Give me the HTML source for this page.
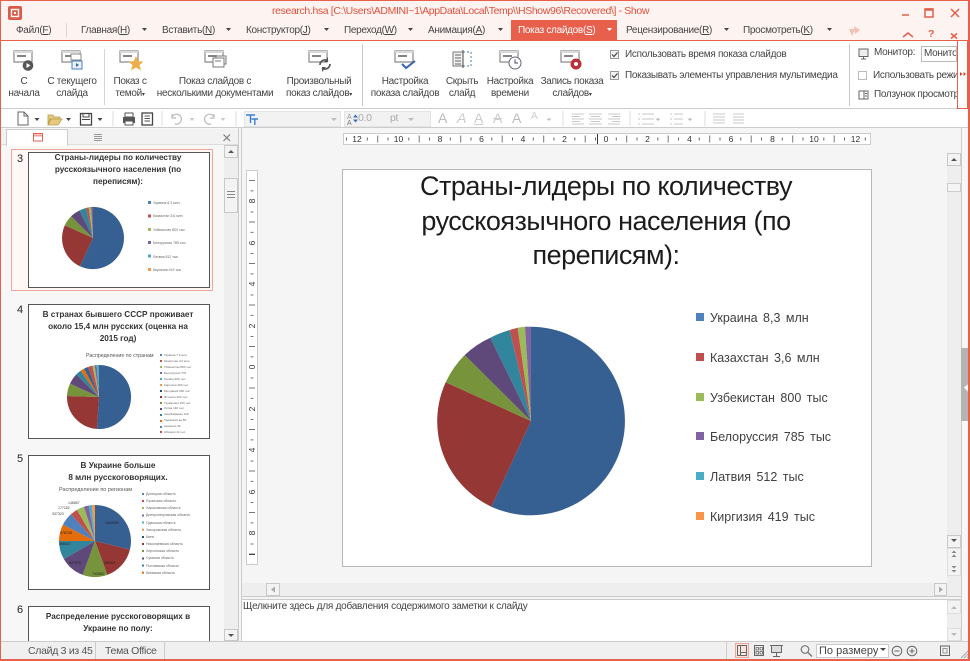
<!DOCTYPE html>
<html><head><meta charset="utf-8"><style>
html,body{margin:0;padding:0;background:#fff}
#r{position:relative;width:970px;height:661px;overflow:hidden;background:#f5f5f5;font-family:"Liberation Sans","Noto Sans CJK SC",sans-serif;color:#444;font-size:10px;letter-spacing:-.3px}
.a{position:absolute}
.t{position:absolute;white-space:nowrap;line-height:12px}
.c{position:absolute;white-space:nowrap;line-height:12px;transform:translateX(-50%);text-align:center}
.b{position:absolute;background:#eee;border:1px solid #ccc;box-sizing:border-box}
.s{position:absolute;background:#f3f3f3;border:1px solid #c8c8c8;box-sizing:border-box}
.k{position:absolute;width:9px;height:9px;border:1px solid #999;box-sizing:border-box;background:#fff}
.l{position:absolute;width:8px;height:8px}
.th{position:absolute;left:28px;width:182px;background:#fff;border:1px solid #555;border-width:1.5px;box-sizing:border-box}
.tt{font-weight:bold;font-size:8.2px;color:#333;text-align:center;letter-spacing:0}
.m{font-size:3.5px;color:#666;line-height:4px;letter-spacing:0}
.g{font-size:12.5px;line-height:14px;color:#404040;word-spacing:2px;letter-spacing:0;left:710px}
.rh{position:absolute;top:133px;height:12px;line-height:12px;width:14px;margin-left:-7px;text-align:center;font-size:8.5px;color:#333;letter-spacing:0;background:#fff}
.rv{position:absolute;left:252px;width:12px;height:10px;line-height:10px;text-align:center;font-size:8.5px;color:#333;letter-spacing:0;transform:translate(-50%,-50%) rotate(-90deg)}
svg{position:absolute;overflow:visible}
</style></head><body><div id="r">
<svg width="0" height="0" style="left:0;top:0"><defs>
<symbol id="pie" viewBox="-100 -100 200 200" overflow="visible">
<path fill="#376092" d="M0 0L0-94.3A94.3 94.3 0 1 1-39.7 85.7Z"/>
<path fill="#953735" d="M0 0L-39.7 85.7A94.3 94.3 0 0 1-85.3-38.7Z"/>
<path fill="#77933c" d="M0 0L-85.3-38.7A94.3 94.3 0 0 1-66.3-66Z"/>
<path fill="#5f497a" d="M0 0L-66.3-66A94.3 94.3 0 0 1-40.7-83.3Z"/>
<path fill="#31859c" d="M0 0L-40.7-83.3A94.3 94.3 0 0 1-21.3-91Z"/>
<path fill="#c0504d" d="M0 0L-21.3-91A94.3 94.3 0 0 1-13.3-93.3Z"/>
<path fill="#9bbb59" d="M0 0L-13.3-93.3A94.3 94.3 0 0 1-6-94.3Z"/>
<path fill="#8064a2" d="M0 0L-6-94.3A94.3 94.3 0 0 1 0-94.3Z"/>
</symbol>
<symbol id="scr" viewBox="0 0 24 16" overflow="visible">
<path d="M1 1H19V12H1Z" fill="#fff" stroke="#8a8a8a" stroke-width="1.2"/><path d="M1 1H19V3H1Z" fill="#d9d9d9"/><path d="M4 6H13" stroke="#666" stroke-width="1.6"/>
</symbol>
</defs></svg>

<!-- title bar -->
<div class="a" style="left:0;top:0;width:970px;height:40px;background:#fdf4f1"></div>
<svg style="left:7px;top:5px" width="16" height="16"><rect x="1" y="1" width="14" height="14" rx="2" fill="#dd5a48"/><rect x="4.5" y="4.5" width="7" height="7" fill="none" stroke="#fff" stroke-width="1.4"/><rect x="7" y="7" width="2" height="2" fill="#fff"/></svg>
<div class="t" style="left:272px;top:5px;color:#e0503d;font-size:10.5px;letter-spacing:-.37px">research.hsa [C:\Users\ADMINI~1\AppData\Local\Temp\\HShow96\Recovered\] - Show</div>
<svg style="left:895px;top:4px" width="70" height="36" fill="none" stroke="#e0604c" stroke-width="1.5"><path d="M7 11H14"/><rect x="30" y="5" width="8" height="8"/><path d="M30 5.5H38" stroke-width="2.5"/><path d="M56 5L64 13M64 5L56 13"/><path d="M8 33L13 29L18 33"/><path d="M56 29.500L62 34.500M62 29.500L56 34.500"/></svg>
<div class="t" style="left:928px;top:28px;color:#e0604c;font-weight:bold;font-size:10.5px">?</div>

<!-- tabs -->
<div class="a" style="left:511px;top:20px;width:106px;height:20px;background:#e8604c"></div>
<div class="t" style="left:16px;top:25px">Файл(<u>F</u>)</div>
<div class="a" style="left:66px;top:23px;width:1px;height:14px;background:#e4d4d0"></div>
<div class="t" style="left:81px;top:25px">Главная(<u>H</u>)</div>
<div class="t" style="left:162px;top:25px">Вставить(<u>N</u>)</div>
<div class="t" style="left:246px;top:25px">Конструктор(<u>J</u>)</div>
<div class="t" style="left:344px;top:25px">Переход(<u>W</u>)</div>
<div class="t" style="left:428px;top:25px">Анимация(<u>A</u>)</div>
<div class="t" style="left:518px;top:25px;color:#fff">Показ слайдов(<u>S</u>)</div>
<div class="t" style="left:626px;top:25px">Рецензирование(<u>R</u>)</div>
<div class="t" style="left:743px;top:25px">Просмотреть(<u>K</u>)</div>
<svg style="left:0;top:27px" width="840" height="5" fill="#444"><path d="M142 1h5l-2.5 3zM226 1h5l-2.5 3zM324 1h5l-2.5 3zM408 1h5l-2.5 3zM498 1h5l-2.5 3zM724 1h5l-2.500 3zM827 1h5l-2.5 3z"/><path fill="#fff" d="M607 1h5l-2.5 3z"/></svg>
<svg style="left:848px;top:25px" width="14" height="12"><path d="M1 4H7L4 11ZM6 1L12 5L7 9Z" fill="#f2c0b4"/></svg>

<!-- ribbon -->
<div class="a" style="left:0;top:40px;width:970px;height:69px;background:#fff;border-top:1px solid #e8604c;border-bottom:1px solid #ccc;box-sizing:border-box"></div>
<div class="a" style="left:104px;top:49px;width:1px;height:56px;background:#d6d6d6"></div>
<div class="a" style="left:362px;top:44px;width:1px;height:62px;background:#c8c8c8"></div>
<div class="a" style="left:849px;top:44px;width:1px;height:62px;background:#c8c8c8"></div>
<div class="a" style="left:957px;top:40px;width:11px;height:69px;border:1px solid #e8604c;box-sizing:border-box;background:#fff"></div>
<svg style="left:960px;top:71px" width="7" height="6" fill="#d8402c"><path d="M0 1l2.5 2L0 5zM3.500 1L6 3L3.500 5z"/></svg>

<svg style="left:13px;top:50px" width="24" height="16"><use href="#scr" width="24" height="16"/></svg>
<svg style="left:22px;top:60px" width="12" height="12"><circle cx="6" cy="5.500" r="5.300" fill="#555"/><path d="M4.500 3L8.500 5.500L4.500 8Z" fill="#fff"/></svg>
<svg style="left:61px;top:50px" width="24" height="22"><use href="#scr" width="24" height="16"/><rect x="10" y="4" width="10" height="6" fill="#fff" stroke="#888"/><rect x="11" y="11" width="10" height="8" fill="#eaf1fb" stroke="#4a7ec0"/><path d="M15 13l3 2-3 2z" fill="#2f6ab0"/></svg>
<svg style="left:119px;top:50px" width="24" height="22"><use href="#scr" width="24" height="16"/><path d="M17 6L19.300 11.300L24.500 11.700L20.500 15L22 20.500L17 17.500L12 20.500L13.500 15L9.500 11.700L14.700 11.300Z" fill="#eeb04e"/></svg>
<svg style="left:204px;top:50px" width="24" height="22"><use href="#scr" width="24" height="16"/><rect x="12" y="6" width="10" height="8" fill="#fff" stroke="#777"/><rect x="9" y="8" width="11" height="9" fill="#fff" stroke="#777"/><path d="M11 11H17" stroke="#777"/></svg>
<svg style="left:308px;top:50px" width="24" height="22" fill="none"><use href="#scr" width="24" height="16"/><path d="M12 15a5 5 0 0 1 8-4M22 14a5 5 0 0 1-8 4" stroke="#555" stroke-width="1.700"/><path d="M20 7v5h-4zM14 22v-5h4z" fill="#555"/></svg>
<svg style="left:394px;top:50px" width="24" height="22" fill="none"><use href="#scr" width="24" height="16"/><path d="M8 14L12 18L21 11" stroke="#3866b0" stroke-width="2"/></svg>
<svg style="left:452px;top:50px" width="22" height="20" fill="none"><rect x="1" y="2" width="10" height="14" fill="#f0f0f0" stroke="#777"/><path d="M3 5H9M3 8H9M3 11H9M3 14H9" stroke="#666"/><rect x="11" y="2" width="8" height="14" stroke="#5575b0" stroke-dasharray="2 2"/><path d="M11 0V18" stroke="#444"/></svg>
<svg style="left:499px;top:50px" width="24" height="22"><use href="#scr" width="24" height="16"/><circle cx="16" cy="13" r="6" fill="#fff" stroke="#667"/><path d="M16 9.500V13H19" fill="none" stroke="#446"/></svg>
<svg style="left:560px;top:50px" width="24" height="22"><use href="#scr" width="24" height="16"/><circle cx="16" cy="14" r="5.500" fill="#b8323a"/><circle cx="16" cy="14" r="2" fill="#fff"/></svg>

<div class="c" style="left:24px;top:76px">С<br>начала</div>
<div class="c" style="left:72px;top:76px">С текущего<br>слайда</div>
<div class="c" style="left:130px;top:76px">Показ с<br>темой<span style="font-size:6px">▾</span></div>
<div class="c" style="left:215px;top:76px">Показ слайдов с<br>несколькими документами</div>
<div class="c" style="left:319px;top:76px">Произвольный<br>показ слайдов<span style="font-size:6px">▾</span></div>
<div class="c" style="left:405px;top:76px">Настройка<br>показа слайдов</div>
<div class="c" style="left:462px;top:76px">Скрыть<br>слайд</div>
<div class="c" style="left:510px;top:76px">Настройка<br>времени</div>
<div class="c" style="left:572px;top:76px">Запись показа<br>слайдов<span style="font-size:6px">▾</span></div>

<div class="k" style="left:610px;top:50px;background:#f2f2f2"></div><div class="k" style="left:610px;top:71px;background:#f2f2f2"></div>
<svg style="left:610px;top:50px" width="10" height="31" fill="none" stroke="#444" stroke-width="1.200"><path d="M2 4.500L4 6.500L7.500 2.500M2 25.500L4 27.500L7.500 23.500"/></svg>
<div class="t" style="left:625px;top:49px">Использовать время показа слайдов</div>
<div class="t" style="left:625px;top:70px">Показывать элементы управления мультимедиа</div>
<svg style="left:858px;top:48px" width="12" height="13" fill="none" stroke="#666"><rect x="1" y="1" width="9" height="7.500" fill="#eee"/><path d="M3 11H8M5.500 9V11"/></svg>
<div class="t" style="left:874px;top:47px">Монитор:</div>
<div class="a" style="left:921px;top:46px;width:36px;height:16px;background:#fff;border:1px solid #bbb;box-sizing:border-box;overflow:hidden"><span class="t" style="left:2px;top:1px">Монитор</span></div>
<div class="k" style="left:858px;top:71px;border-color:#bbb"></div>
<div class="a" style="left:873px;top:70px;width:84px;height:13px;overflow:hidden"><span class="t" style="left:0;top:0">Использовать режим</span></div>
<svg style="left:858px;top:90px" width="12" height="11" fill="none" stroke="#666"><rect x="1" y="1" width="9" height="8"/><path d="M6 1V9M7 3.500H9M7 6H9"/></svg>
<div class="a" style="left:873px;top:89px;width:84px;height:13px;overflow:hidden"><span class="t" style="left:1px;top:0">Ползунок просмотра</span></div>

<!-- toolbar -->
<div class="a" style="left:0;top:109px;width:970px;height:19px;background:#fff;border-bottom:1px solid #ccc;box-sizing:border-box"></div>
<svg style="left:0;top:109px" width="700" height="19" fill="none">
<path d="M18 3H24L28 7V16H18Z" stroke="#666" fill="#fff"/><path d="M24 3V7H28" stroke="#666"/>
<path d="M34.500 9h5l-2.500 3zM66 9h5l-2.500 3zM97.500 9h5l-2.500 3z" fill="#444"/>
<path d="M48 6H53L54 8H60V10H50L48 16ZM48 16H58L62 10H51Z" fill="#e7c97a" stroke="#b89a50" stroke-width=".8"/>
<rect x="80.500" y="4.500" width="11" height="11.500" stroke="#444" stroke-width="1.300"/><path d="M83 4.500V8H89V4.500M82 10.500H90" stroke="#444"/>
<path d="M113 2V17" stroke="#ddd"/>
<rect x="123" y="8" width="12" height="6" fill="#555"/><rect x="125" y="4" width="8" height="4" stroke="#555"/><rect x="125" y="12" width="8" height="4" fill="#fff" stroke="#555"/>
<rect x="142" y="4" width="10.500" height="12" stroke="#444" stroke-width="1.300"/><path d="M144.500 7H150M144.500 9.500H150M144.500 12H150" stroke="#555"/>
<path d="M162 2V17" stroke="#ddd"/>
<path d="M172 8a5 5 0 1 1 3 7M172 5V9H176" stroke="#bbb" stroke-width="1.200"/><path d="M189.500 9h5l-2.500 3zM220.500 9h5l-2.500 3z" fill="#ccc"/>
<path d="M214 8a5 5 0 1 0-3 7M214 5V9H210" stroke="#bbb" stroke-width="1.200"/>
<path d="M236 2V17" stroke="#ddd"/>
</svg>
<div class="a" style="left:244px;top:111px;width:97px;height:16px;background:#f2f2f2;border:1px solid #e4e4e4;box-sizing:border-box"></div>
<svg style="left:245px;top:113px" width="16" height="13" fill="none" stroke="#3a7fd0" stroke-width="1.400"><path d="M1 2H10M5.500 2V10M6.500 6H13M9.800 6V12"/></svg>
<svg style="left:331px;top:118px" width="6" height="4"><path d="M0 0h6L3 3z" fill="#bbb"/></svg>
<div class="a" style="left:344px;top:111px;width:87px;height:16px;background:#f2f2f2;border:1px solid #e4e4e4;box-sizing:border-box"></div>
<div class="t" style="left:347px;top:112px;color:#999;font-size:7px">A</div>
<div class="t" style="left:347px;top:118px;color:#777;font-size:7px">A</div>
<svg style="left:353px;top:114px" width="5" height="9" fill="#3a6fc0"><path d="M0 3.500L2.500 0.500L5 3.500ZM0 5.500L2.500 8.500L5 5.500Z"/></svg>
<div class="t" style="left:358px;top:112px;color:#aaa;font-size:10.500px">0.0</div>
<div class="t" style="left:390px;top:112px;color:#aaa;font-size:10.500px">pt</div>
<svg style="left:408px;top:118px" width="22" height="4"><path d="M0 0h6L3 3z" fill="#bbb"/></svg>
<div class="t" style="left:438px;top:112px;color:#bbb;font-size:14px">A</div>
<div class="t" style="left:457px;top:112px;color:#ccc;font-size:14px;font-style:italic">A</div>
<div class="t" style="left:474px;top:112px;color:#ccc;font-size:14px;text-decoration:underline">A</div>
<div class="t" style="left:493px;top:112px;color:#ccc;font-size:14px;text-decoration:line-through">A</div>
<div class="t" style="left:512px;top:112px;color:#bbb;font-size:14px">A</div>
<div class="t" style="left:531px;top:111px;color:#ccc;font-size:10px">A</div>
<svg style="left:540px;top:109px" width="230" height="19" fill="none" stroke="#c8c8c8">
<path d="M6.500 9.500h5L9 12z" fill="#bbb" stroke="none"/>
<path d="M23 2V17" stroke="#ddd"/>
<path d="M32 5H44M32 7.500H40M32 10H44M32 12.500H40M32 15H44M49 5H62M51 7.500H60M49 10H62M51 12.500H60M49 15H62M68 5H80M72 7.500H80M68 10H80M72 12.500H80M68 15H80"/>
<path d="M90 2V17" stroke="#ddd"/>
<path d="M102 5H114M102 10H114M102 15H114M98 5H100M98 10H100M98 15H100M134 5H143M134 10H143M134 15H143M130 5H132M130 10H132M130 15H132"/>
<path d="M115.500 9.500h5l-2.500 2.500zM147.500 9.500h5l-2.500 2.500z" fill="#bbb" stroke="none"/>
<path d="M165 2V17" stroke="#ddd"/>
<path d="M173 5H185M173 8H185M173 11H185M173 14H185M193 5H204M193 8H204M193 11H204M193 14H204"/>
</svg>

<!-- left panel -->
<div class="a" style="left:1px;top:128px;width:237px;height:513px;background:#f7f7f7"></div>
<div class="a" style="left:1px;top:129px;width:237px;height:16px;background:#f2f2f2;border-bottom:1px solid #ddd;box-sizing:border-box"></div>
<div class="a" style="left:6px;top:129px;width:62px;height:17px;background:#fff;border:1px solid #ccc;border-bottom:none;box-sizing:border-box"></div>
<svg style="left:32px;top:132px" width="72" height="13" fill="none"><rect x="1.500" y="1.500" width="9" height="7.500" stroke="#e8604c"/><path d="M2 3.500H10" stroke="#e8a098" stroke-width="2"/><path d="M62 2.500h8M62 4.500h8M62 6.500h8M62 8.500h8" stroke="#999"/></svg>
<svg style="left:222px;top:133px" width="10" height="10" stroke="#777" stroke-width="1.100"><path d="M1.500 1.500L8 8M8 1.500L1.500 8"/></svg>
<div class="a" style="left:11px;top:149px;width:202px;height:142px;background:#fff8f6;border:1px solid #f3a598;box-sizing:border-box"></div>
<div class="a" style="left:224px;top:145px;width:14px;height:496px;background:#eee"></div>
<div class="s" style="left:224px;top:145px;width:14px;height:13px"></div>
<div class="s" style="left:224px;top:178px;width:14px;height:35px"></div>
<div class="s" style="left:224px;top:629px;width:14px;height:12px"></div>
<svg style="left:224px;top:145px" width="14" height="497"><path d="M4 8h6L7 5zM4 489h6L7 492z" fill="#555"/><path d="M3 46.500h8M3 49.500h8M3 52.500h8" stroke="#888"/></svg>
<div class="a" style="left:238px;top:128px;width:1px;height:513px;background:#ccc"></div>
<div class="a" style="left:241px;top:128px;width:1px;height:513px;background:#ccc"></div>

<div class="t" style="left:17px;top:153px;font-size:11px;color:#222">3</div>
<div class="t" style="left:17px;top:304px;font-size:11px;color:#222">4</div>
<div class="t" style="left:17px;top:453px;font-size:11px;color:#222">5</div>
<div class="t" style="left:17px;top:604px;font-size:11px;color:#222">6</div>

<div class="th" style="top:152px;height:136px"></div>
<div class="th" style="top:304px;height:135px"></div>
<div class="th" style="top:455px;height:135px"></div>
<div class="a" style="left:28px;top:606px;width:182px;height:35px;background:#fff;border:1.500px solid #555;border-bottom:none;box-sizing:border-box"></div>

<div class="c tt" style="left:118px;top:152px">Страны-лидеры по количеству<br>русскоязычного населения (по<br>переписям):</div>
<svg style="left:60px;top:205px" width="66" height="66"><use href="#pie" width="66" height="66"/></svg>
<svg style="left:148px;top:201px" width="4" height="72"><rect y="0" width="3" height="3" fill="#4f81bd"/><rect y="13.500" width="3" height="3" fill="#c0504d"/><rect y="27" width="3" height="3" fill="#9bbb59"/><rect y="40" width="3" height="3" fill="#8064a2"/><rect y="53.500" width="3" height="3" fill="#4bacc6"/><rect y="67" width="3" height="3" fill="#f79646"/></svg>
<div class="t m" style="left:153px;top:201px">Украина 8,3 млн</div>
<div class="t m" style="left:153px;top:214px">Казахстан 3,6 млн</div>
<div class="t m" style="left:153px;top:228px">Узбекистан 800 тыс</div>
<div class="t m" style="left:153px;top:241px">Белоруссия 785 тыс</div>
<div class="t m" style="left:153px;top:255px">Латвия 512 тыс</div>
<div class="t m" style="left:153px;top:268px">Киргизия 419 тыс</div>

<div class="c tt" style="left:118px;top:309px">В странах бывшего СССР проживает<br>около 15,4 млн русских (оценка на<br>2015 год)</div>
<div class="t" style="left:86px;top:350px;font-size:5.300px;letter-spacing:0;color:#555">Распределение по странам</div>
<svg style="left:66.500px;top:364.500px" width="64" height="64" viewBox="-96 -96 192 192">
<path fill="#376092" d="M0 0L0-96A96 96 0 1 1-6 95.800Z"/>
<path fill="#953735" d="M0 0L-6 95.800A96 96 0 0 1-96-3Z"/>
<path fill="#77933c" d="M0 0L-96-3A96 96 0 0 1-87-40Z"/>
<path fill="#5f497a" d="M0 0L-87-40A96 96 0 0 1-68-68Z"/>
<path fill="#31859c" d="M0 0L-68-68A96 96 0 0 1-55-79Z"/>
<path fill="#e46c0a" d="M0 0L-55-79A96 96 0 0 1-45-85Z"/>
<path fill="#376092" d="M0 0L-45-85A96 96 0 0 1-33-90Z"/>
<path fill="#c0504d" d="M0 0L-33-90A96 96 0 0 1-20-94Z"/>
<path fill="#9bbb59" d="M0 0L-20-94A96 96 0 0 1-13-95Z"/>
<path fill="#8064a2" d="M0 0L-13-95A96 96 0 0 1-7-96Z"/>
<path fill="#4bacc6" d="M0 0L-7-96A96 96 0 0 1 0-96Z"/>
</svg>
<svg style="left:160px;top:354px" width="3" height="80"><rect y="0" width="2" height="2" fill="#4f81bd"/><rect y="6" width="2" height="2" fill="#c0504d"/><rect y="12" width="2" height="2" fill="#9bbb59"/><rect y="18" width="2" height="2" fill="#8064a2"/><rect y="24" width="2" height="2" fill="#4bacc6"/><rect y="30" width="2" height="2" fill="#f79646"/><rect y="36" width="2" height="2" fill="#2c4d75"/><rect y="42" width="2" height="2" fill="#953735"/><rect y="48" width="2" height="2" fill="#77933c"/><rect y="54" width="2" height="2" fill="#5f497a"/><rect y="60" width="2" height="2" fill="#31859c"/><rect y="66" width="2" height="2" fill="#e46c0a"/><rect y="72" width="2" height="2" fill="#4f81bd"/><rect y="77" width="2" height="2" fill="#c0504d"/></svg>
<div class="t m" style="left:164px;top:353px;line-height:5.930px;font-size:3px">Украина 7,4 млн<br>Казахстан 3,6 млн<br>Узбекистан 800 тыс<br>Белоруссия 770<br>Латвия 600 тыс<br>Киргизия 400 тыс<br>Молдавия 360 тыс<br>Эстония 320 тыс<br>Туркмения 150 тыс<br>Литва 140 тыс<br>Азербайджан 120<br>Таджикистан 80<br>Армения 30<br>Абхазия 11 тыс</div>

<div class="c tt" style="left:118px;top:460px">В Украине больше<br>8 млн русскоговорящих.</div>
<div class="t" style="left:59px;top:487px;font-size:5.500px;letter-spacing:0;color:#555;line-height:7px">Распределение по регионам</div>
<svg style="left:58.500px;top:505px" width="72" height="72" viewBox="-108 -108 216 216">
<path fill="#376092" d="M0 0L0-108A108 108 0 0 1 104.800 26Z"/>
<path fill="#953735" d="M0 0L104.800 26A108 108 0 0 1 36.900 101.500Z"/>
<path fill="#77933c" d="M0 0L36.900 101.500A108 108 0 0 1-36.900 101.500Z"/>
<path fill="#5f497a" d="M0 0L-36.900 101.500A108 108 0 0 1-93.500 54Z"/>
<path fill="#31859c" d="M0 0L-93.500 54A108 108 0 0 1-108 0Z"/>
<path fill="#e46c0a" d="M0 0L-108 0A108 108 0 0 1-96.200-49Z"/>
<path fill="#4f81bd" d="M0 0L-96.200-49A108 108 0 0 1-72.300-80.300Z"/>
<path fill="#c0504d" d="M0 0L-72.300-80.300A108 108 0 0 1-54-93.500Z"/>
<path fill="#9bbb59" d="M0 0L-54-93.500A108 108 0 0 1-33.400-102.700Z"/>
<path fill="#8064a2" d="M0 0L-33.400-102.700A108 108 0 0 1-18.800-106.400Z"/>
<path fill="#4bacc6" d="M0 0L-18.800-106.400A108 108 0 0 1-9.400-107.600Z"/>
<path fill="#f79646" d="M0 0L-9.400-107.600A108 108 0 0 1 0-108Z"/>
</svg>
<div class="t m" style="left:105px;top:521px;color:#222">1844399</div>
<div class="t m" style="left:104px;top:561px;color:#222">950321</div>
<div class="t m" style="left:92px;top:572px;color:#222">742552</div>
<div class="t m" style="left:69px;top:561px;color:#222">627578</div>
<div class="t m" style="left:59px;top:542px;color:#222">568537</div>
<div class="t m" style="left:60px;top:531px;color:#222">476748</div>
<div class="t m" style="left:52px;top:512px;color:#444">337323</div>
<div class="t m" style="left:58px;top:506px;color:#444">177182</div>
<div class="t m" style="left:68px;top:501px;color:#444">146857</div>
<svg style="left:142px;top:493px" width="3" height="82"><rect y="0" width="2" height="2" fill="#4f81bd"/><rect y="7" width="2" height="2" fill="#c0504d"/><rect y="14" width="2" height="2" fill="#9bbb59"/><rect y="21.500" width="2" height="2" fill="#8064a2"/><rect y="28.500" width="2" height="2" fill="#4bacc6"/><rect y="35.700" width="2" height="2" fill="#f79646"/><rect y="43" width="2" height="2" fill="#2c4d75"/><rect y="50" width="2" height="2" fill="#953735"/><rect y="57" width="2" height="2" fill="#77933c"/><rect y="64.500" width="2" height="2" fill="#5f497a"/><rect y="71.500" width="2" height="2" fill="#31859c"/><rect y="78.700" width="2" height="2" fill="#e46c0a"/></svg>
<div class="t m" style="left:146px;top:491px;line-height:7.150px;font-size:3.500px">Донецкая область<br>Луганская область<br>Харьковская область<br>Днепропетровская область<br>Одесская область<br>Запорожская область<br>Киев<br>Николаевская область<br>Херсонская область<br>Сумская область<br>Полтавская область<br>Киевская область</div>

<div class="c tt" style="left:118px;top:611px">Распределение русскоговорящих в<br>Украине по полу:</div>

<!-- main -->
<div class="a" style="left:343px;top:133px;width:528px;height:12px;background:#fff;border:1px solid #ccc;box-sizing:border-box"></div>
<svg style="left:343px;top:133px" width="528" height="12" stroke="#666">
<defs><pattern id="pt" x="0" width="41.500" height="12" patternUnits="userSpaceOnUse"><path d="M3.500 4.500V7.500M24.300 4.500V7.500" stroke="#666"/><path d="M34.700 2.500V9.500" stroke="#777"/></pattern></defs>
<rect x="1" y="1" width="526" height="10" fill="url(#pt)" stroke="none"/><path d="M254.500 1V11" stroke="#333"/></svg>
<div class="rh" style="left:357px;top:134px;height:10px;line-height:10px">12</div>
<div class="rh" style="left:398.500px;top:134px;height:10px;line-height:10px">10</div>
<div class="rh" style="left:440px;top:134px;height:10px;line-height:10px">8</div>
<div class="rh" style="left:481.500px;top:134px;height:10px;line-height:10px">6</div>
<div class="rh" style="left:523px;top:134px;height:10px;line-height:10px">4</div>
<div class="rh" style="left:564.500px;top:134px;height:10px;line-height:10px">2</div>
<div class="rh" style="left:606px;top:134px;height:10px;line-height:10px">0</div>
<div class="rh" style="left:647.500px;top:134px;height:10px;line-height:10px">2</div>
<div class="rh" style="left:689.500px;top:134px;height:10px;line-height:10px">4</div>
<div class="rh" style="left:731px;top:134px;height:10px;line-height:10px">6</div>
<div class="rh" style="left:772.500px;top:134px;height:10px;line-height:10px">8</div>
<div class="rh" style="left:814px;top:134px;height:10px;line-height:10px">10</div>
<div class="rh" style="left:855.500px;top:134px;height:10px;line-height:10px">12</div>

<div class="a" style="left:246px;top:170px;width:12px;height:395px;background:#fff;border:1px solid #ccc;box-sizing:border-box"></div>
<svg style="left:246px;top:170px" width="12" height="395">
<defs><pattern id="pv" y="0" width="12" height="41.500" patternUnits="userSpaceOnUse"><path d="M3 10.500H9" stroke="#777"/><path d="M4.500 0.500H7.500M4.500 20.900H7.500" stroke="#777"/></pattern></defs>
<rect x="1" y="1" width="10" height="393" fill="url(#pv)"/><path d="M3 384.500H9" stroke="#444"/></svg>
<div class="rv" style="top:201px">8</div>
<div class="rv" style="top:243px">6</div>
<div class="rv" style="top:284px">4</div>
<div class="rv" style="top:326px">2</div>
<div class="rv" style="top:367px">0</div>
<div class="rv" style="top:409px">2</div>
<div class="rv" style="top:450px">4</div>
<div class="rv" style="top:492px">6</div>
<div class="rv" style="top:533px">8</div>
<div class="a" style="left:342px;top:169px;width:530px;height:398px;background:#fff;border:1px solid #b8b8b8;box-sizing:border-box"></div>

<div class="c" style="left:606px;top:169px;font-size:27px;line-height:34.500px;color:#1c1c1c;letter-spacing:-.5px">Страны-лидеры по количеству<br>русскоязычного населения (по<br>переписям):</div>
<svg style="left:430.700px;top:321px" width="200" height="200"><use href="#pie" width="200" height="200"/></svg>
<div class="l" style="left:696px;top:313px;background:#4f81bd"></div>
<div class="l" style="left:696px;top:353px;background:#c0504d"></div>
<div class="l" style="left:696px;top:393px;background:#9bbb59"></div>
<div class="l" style="left:696px;top:432px;background:#8064a2"></div>
<div class="l" style="left:696px;top:472px;background:#4bacc6"></div>
<div class="l" style="left:696px;top:512px;background:#f79646"></div>
<div class="t g" style="top:311px">Украина 8,3 млн</div>
<div class="t g" style="top:351px">Казахстан 3,6 млн</div>
<div class="t g" style="top:391px">Узбекистан 800 тыс</div>
<div class="t g" style="top:430px">Белоруссия 785 тыс</div>
<div class="t g" style="top:470px">Латвия 512 тыс</div>
<div class="t g" style="top:510px">Киргизия 419 тыс</div>

<!-- right scrollbar -->
<div class="a" style="left:947px;top:128px;width:14px;height:469px;background:#f5f5f5"></div>
<div class="a" style="left:947px;top:153px;width:14px;height:444px;background:#eee"></div>
<div class="s" style="left:947px;top:153px;width:14px;height:13px"></div>
<div class="a" style="left:947px;top:183px;width:14px;height:9px;background:#f5f5f5;border:1px solid #ccc;box-sizing:border-box"></div>
<div class="s" style="left:947px;top:535px;width:14px;height:13px"></div>
<div class="s" style="left:947px;top:548px;width:14px;height:28px;border-color:#ddd"></div>
<div class="a" style="left:961px;top:128px;width:7px;height:531px;background:#f7f7f7;border-left:1px solid #ccc;box-sizing:border-box"></div>
<div class="a" style="left:961px;top:348px;width:7px;height:73px;background:#b4b4b4"></div>
<svg style="left:947px;top:153px" width="22" height="420" fill="#555"><path d="M4 8h6L7 5zM4 386h6L7 389z"/><path fill="#888" d="M4.500 400h5L7 397.500zM4.500 404h5L7 401.500zM4.500 413h5L7 415.500zM4.500 417h5L7 419.500z"/><path d="M17 235l4-3v7z" fill="#fff" transform="translate(0,-.500)"/></svg>

<!-- hscroll -->
<div class="a" style="left:242px;top:583px;width:705px;height:13px;background:#eee"></div>
<div class="s" style="left:266px;top:583px;width:14px;height:13px"></div>
<div class="s" style="left:934px;top:583px;width:13px;height:13px"></div>
<svg style="left:266px;top:583px" width="682" height="13" fill="#aaa"><path d="M9 3.500v6L5 6.500zM673 3.500v6L677 6.500z"/></svg>
<div class="a" style="left:242px;top:596px;width:719px;height:1px;background:#ccc"></div>
<div class="a" style="left:242px;top:599px;width:719px;height:1px;background:#ccc"></div>
<div class="a" style="left:242px;top:597px;width:719px;height:2px;background:#f3f3f3"></div>
<div class="a" style="left:242px;top:600px;width:705px;height:41px;background:#fff"></div>
<div class="t" style="left:243px;top:601px;letter-spacing:-.25px">Щелкните здесь для добавления содержимого заметки к слайду</div>
<div class="a" style="left:947px;top:600px;width:14px;height:41px;background:#eee"></div>
<div class="s" style="left:947px;top:600px;width:14px;height:14px;border-color:#ddd"></div>
<div class="s" style="left:947px;top:628px;width:14px;height:13px;border-color:#ddd"></div>
<svg style="left:947px;top:600px" width="14" height="41" fill="#bbb"><path d="M4 9h6L7 6zM4 33h6L7 36z"/></svg>

<!-- status -->
<div class="a" style="left:1px;top:641px;width:968px;height:18px;background:#f0f0f0;border-top:1px solid #ccc;box-sizing:border-box"></div>
<div class="t" style="left:28px;top:645px;color:#555;font-size:10.500px">Слайд 3 из 45</div>
<div class="a" style="left:95px;top:642px;width:1px;height:17px;background:#ccc"></div>
<div class="t" style="left:105px;top:645px;color:#555;font-size:10.500px">Тема Office</div>
<div class="a" style="left:164px;top:642px;width:1px;height:17px;background:#ccc"></div>
<div class="a" style="left:726px;top:642px;width:1px;height:17px;background:#ccc"></div>
<div class="a" style="left:735px;top:643px;width:14px;height:15px;background:#fbe4de;border:1px solid #f3a598;box-sizing:border-box"></div>
<svg style="left:735px;top:643px" width="220" height="16" fill="none" stroke="#666">
<rect x="2.500" y="2.500" width="9" height="10"/><path d="M5.500 2.500V12.500M5.500 9.500H11.500"/>
<rect x="19.500" y="2.500" width="9" height="10"/><path d="M21 4.500h2.500v2.500H21zM25 4.500h2.500v2.500H25zM21 8.500h2.500v2.500H21zM25 8.500h2.500v2.500H25z" stroke-width=".8"/>
<rect x="36.500" y="2.500" width="10" height="7" fill="#ddd"/><path d="M35 2.500H48M41.500 9.500V13M38 13.500H45"/>
<circle cx="70" cy="6.500" r="3.800" stroke="#777" stroke-width="1.200"/><path d="M73 9.500L77 13.500" stroke="#777" stroke-width="1.400"/>
<circle cx="162" cy="8" r="4.800"/><path d="M159.500 8H164.500"/>
<circle cx="177" cy="8" r="4.800"/><path d="M174.500 8H179.500M177 5.500V10.500"/>
<rect x="205.500" y="3" width="9" height="9.500"/><rect x="208" y="5.500" width="4" height="4.500" stroke="#999"/>
</svg>
<div class="a" style="left:816px;top:644px;width:73px;height:14px;background:#fff;border:1px solid #ccc;box-sizing:border-box;overflow:hidden"><span class="t" style="left:2px;top:0;color:#444;font-size:11px;letter-spacing:0">По размеру с</span><span class="a" style="right:0;top:0;width:10px;height:12px;background:#fff"></span></div>
<svg style="left:880px;top:648px" width="6" height="4"><path d="M0 0h6L3 3z" fill="#444"/></svg>
<svg style="left:960px;top:650px" width="9" height="9" stroke="#aaa"><path d="M1 8L8 1M4 8L8 4M7 8L8 7"/></svg>

<!-- window border -->
<div class="a" style="left:0;top:0;width:970px;height:1px;background:#e8604c"></div>
<div class="a" style="left:0;top:0;width:1px;height:661px;background:#e8604c"></div>
<div class="a" style="left:968px;top:0;width:2px;height:661px;background:#e8604c"></div>
<div class="a" style="left:0;top:659px;width:970px;height:2px;background:#e8604c"></div>
</div></body></html>
